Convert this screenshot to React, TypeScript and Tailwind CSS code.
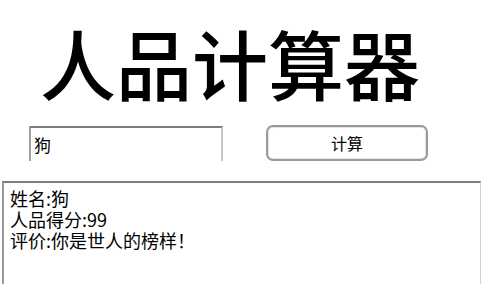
const cjk = { fontFamily: '"Noto Sans CJK SC", "Noto Sans", sans-serif' };

export default function App() {
  const name = "狗";
  const score = 99;
  const comment = "你是世人的榜样！";

  return (
    <div className="flex h-[284px] w-[483px] flex-col overflow-hidden bg-white text-black" style={cjk}>
      <h1 className="pl-[40px] pt-[16px] text-[76px] font-medium leading-[92px]">人品计算器</h1>

      <div className="mt-[17px] flex items-center">
        <div className="ml-[29px] flex h-[35px] w-[194px] items-center border-t-2 border-l-2 border-r-2 border-t-[#7d7d7d] border-l-[#a0a0a0] border-r-[#c8c8c8] pl-[3px] text-[17px] leading-none">
          {name}
        </div>
        <button className="ml-[43px] flex h-[36px] w-[162px] items-center justify-center rounded-[7px] border-2 border-[#9a9a9a] bg-white text-[16px] leading-none shadow-[inset_0_0_0_1px_#e4e4e4]">
          计算
        </button>
      </div>

      <div className="ml-[2px] mr-[2px] mt-[20px] flex-1 border-t-2 border-l-2 border-r border-t-[#7d7d7d] border-l-[#9a9a9a] border-r-[#d0d0d0] pl-[6px] pt-[5px] text-[18px] leading-[21px]">
        <div>姓名:{name}</div>
        <div>人品得分:{score}</div>
        <div>评价:{comment}</div>
      </div>
    </div>
  );
}
